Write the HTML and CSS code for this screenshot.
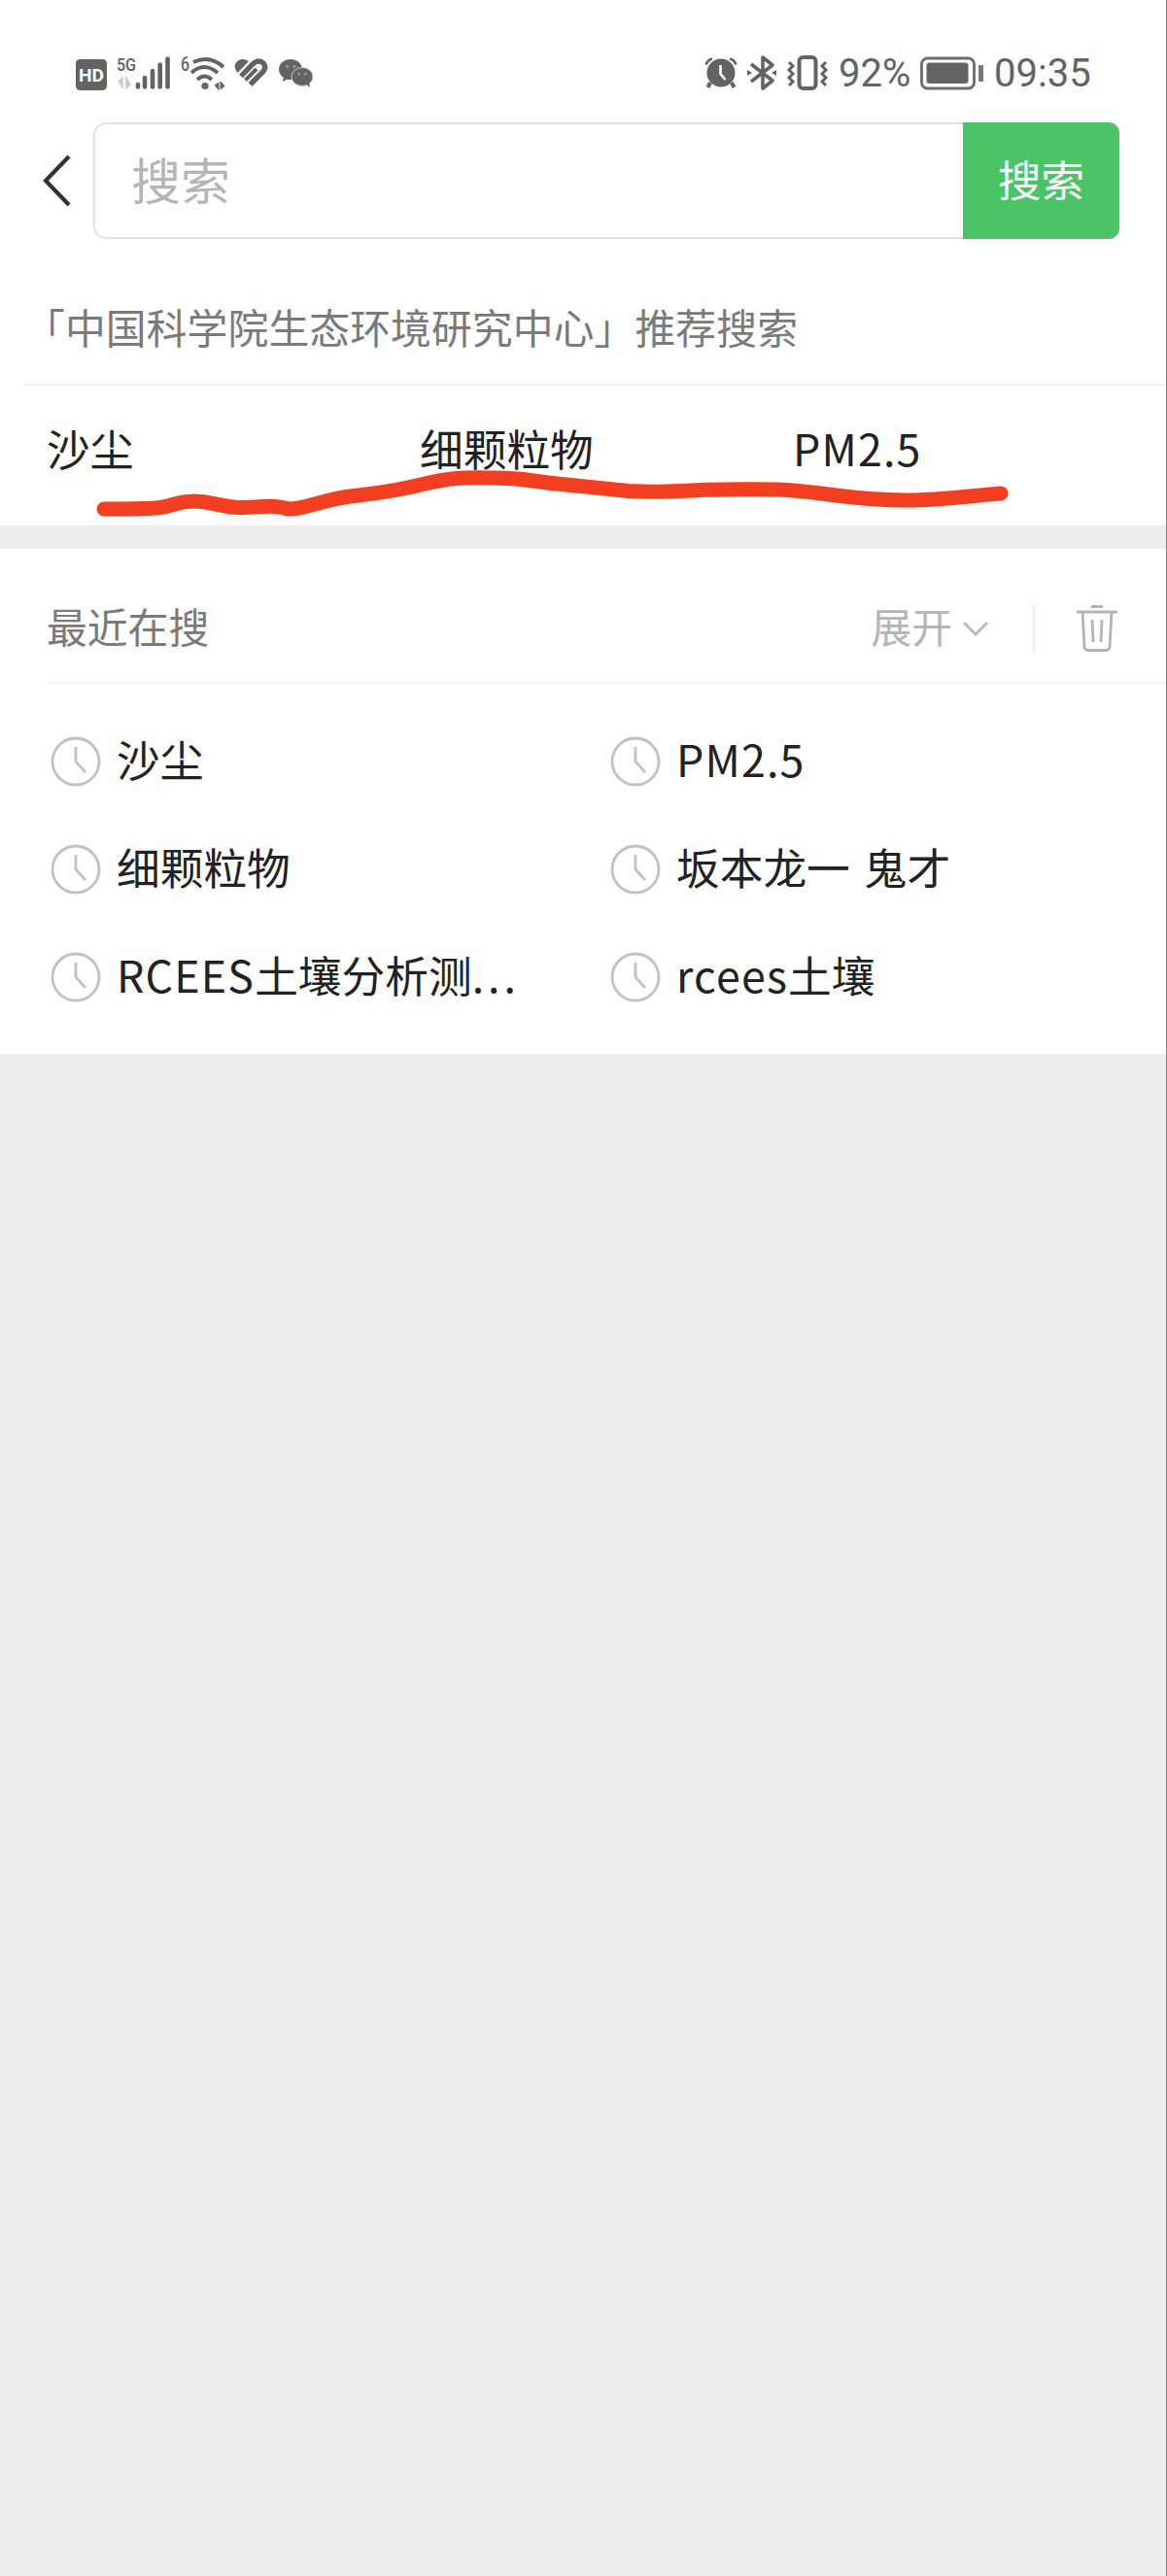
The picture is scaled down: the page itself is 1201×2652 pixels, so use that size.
FILE: index.html
```html
<!DOCTYPE html>
<html lang="zh-CN">
<head>
<meta charset="utf-8">
<meta name="viewport" content="width=device-width, initial-scale=1">
<title>搜索</title>
<link rel="stylesheet" href="styles.css">
</head>
<body>

<div class="page">

  <div class="status-bar">
    <div class="status-left">
      <svg class="icon-hd" width="32" height="36" viewBox="0 0 32 36">
        <rect x="0" y="4" width="32" height="32" rx="4.500" fill="#636363"/>
        <text x="3" y="26.500" font-size="19" font-weight="700" textLength="26" lengthAdjust="spacingAndGlyphs">HD</text>
      </svg>
      <svg class="icon-signal" width="56" height="36" viewBox="0 0 56 36">
        <text x="0" y="15.500" font-size="19" font-weight="500" textLength="20" lengthAdjust="spacingAndGlyphs">5G</text>
        <path d="M2 27l4-4v11M10 23v11l4-4z" fill="#ccc" stroke="#ccc" stroke-width="1.500"/>
        <path d="M22 30v2.500M29 23v9.500M37 16v16.500M44.700 9.500v23M52.500 3.500v29" fill="none" stroke="#636363" stroke-width="4.600" stroke-linecap="round"/>
      </svg>
      <svg class="icon-wifi" width="47" height="36" viewBox="0 0 47 36">
        <text x="0" y="15.500" font-size="20" font-weight="500" textLength="9" lengthAdjust="spacingAndGlyphs">6</text>
        <g fill="none" stroke="#636363" stroke-width="3.800">
          <path d="M13 7Q30 -1 44 12"/>
          <path d="M11 18Q24 6 38 18"/>
          <path d="M17 25Q24.500 18 32 25"/>
        </g>
        <circle cx="25" cy="31.500" r="3.600" fill="#636363"/>
        <path d="M35 31l4-3v8M41 27v8l4-3.500z" fill="#636363" stroke="#636363" stroke-width="1"/>
      </svg>
      <svg class="icon-heart" width="35" height="36" viewBox="0 0 35 36">
        <path d="M3.500 18Q-1.500 11 2 7.500Q7 1.500 15 6z" fill="#636363"/>
        <path d="M7 21.500L19 9Q25 3.500 30 8Q34 12.500 29 17.500L16.500 30" fill="none" stroke="#636363" stroke-width="5.400"/>
        <path d="M11.500 25.500L23 14" fill="none" stroke="#636363" stroke-width="4"/>
      </svg>
      <svg class="icon-wechat" width="36" height="36" viewBox="0 0 36 36">
        <ellipse cx="12" cy="14.500" rx="12" ry="10.500" fill="#636363"/>
        <path d="M5 21l-1 6 6-3z" fill="#636363"/>
        <ellipse cx="24" cy="22" rx="11" ry="9.500" fill="#636363" stroke="#ccc" stroke-width="1"/>
        <path d="M27 29l5 4-1-6z" fill="#636363"/>
        <g fill="#a0a0a0">
          <circle cx="8.500" cy="11.500" r="1.500"/><circle cx="16" cy="11.500" r="1.500"/>
          <circle cx="20.500" cy="19" r="1.300"/><circle cx="27.500" cy="19" r="1.300"/>
        </g>
      </svg>
    </div>

    <div class="status-right">
      <svg class="icon-alarm" width="34" height="36" viewBox="0 0 34 36">
        <circle cx="17" cy="18" r="14.500" fill="#636363"/>
        <path d="M1.500 9.500Q3 5 8 3.500M32.500 9.500Q31 5 26 3.500" fill="none" stroke="#636363" stroke-width="2.500"/>
        <path d="M6 28l-2.500 5M28 28l2.500 5" stroke="#636363" stroke-width="4"/>
        <path d="M16.500 10v9l5 6" fill="none" stroke="#fff" stroke-width="2.600"/>
      </svg>
      <svg class="icon-bluetooth" width="30" height="36" viewBox="0 0 30 36">
        <path d="M4 9l22 17-10 8V2l10 8L4 27" fill="none" stroke="#636363" stroke-width="3.600" stroke-linejoin="round"/>
        <path d="M0 15l5 3-5 3zM30 15l-5 3 5 3z" fill="#636363"/>
      </svg>
      <svg class="icon-vibrate" width="42" height="36" viewBox="0 0 42 36">
        <rect x="12.500" y="2" width="17" height="32" rx="4" fill="none" stroke="#636363" stroke-width="4"/>
        <path d="M2 7l4 4-4 4 4 4-4 4 4 4-4 4M40 7l-4 4 4 4-4 4 4 4-4 4 4 4" fill="none" stroke="#636363" stroke-width="3"/>
      </svg>
      <span class="battery-text">92%</span>
      <svg class="icon-battery" width="65" height="36" viewBox="0 0 65 36">
        <rect x="1.500" y="3" width="54" height="31" rx="6" fill="none" stroke="#6c6c6c" stroke-width="2.800"/>
        <rect x="6.500" y="7.500" width="43" height="21.500" rx="3" fill="#636363"/>
        <rect x="60" y="10" width="5" height="17" rx="1" fill="#777"/>
      </svg>
      <span class="clock">09:35</span>
    </div>
  </div>

  <form class="search" action="javascript:void(0)">
    <svg class="back" width="30" height="56" viewBox="0 0 30 56">
      <path d="M27 3L3 28l24 25" fill="none" stroke="#333" stroke-width="4.200"/>
    </svg>
    <input type="text" class="search-input" placeholder="搜索">
    <button type="submit" class="search-button">搜索</button>
  </form>

  <div class="recommend">
    <h2 class="recommend-title">「中国科学院生态环境研究中心」推荐搜索</h2>
    <div class="recommend-list">
      <span>沙尘</span>
      <span>细颗粒物</span>
      <span class="latin">PM2.5</span>
    </div>
    <!-- hand-drawn underline over the words -->
    <svg class="marker" width="950" height="60" viewBox="90 480 950 60">
      <path d="M107 524C130 524 145 524 160 523S182 516 200 516S228 522.500 247 522.500S280 519 297 524C315 524 330 515 360 511C385 508 400 507 433 499S475 491.500 510 492S550 496 573 498L647 505.500Q672 507 700 505.500T727 504.200Q770 503.500 800 504C843 505 870 515 933 515C965 515 995 511 1030 508"/>
    </svg>
  </div>

  <div class="recent">
    <div class="recent-header">
      <h2 class="recent-title">最近在搜</h2>
      <span class="expand">展开</span>
      <svg class="arrow" width="28" height="18" viewBox="0 0 28 18">
        <path d="M2 3l12 12L26 3" fill="none" stroke="#b8b8b8" stroke-width="2.800"/>
      </svg>
      <span class="separator"></span>
      <svg class="trash" width="44" height="50" viewBox="0 0 44 50">
        <g fill="none" stroke="#b4b4b4" stroke-width="2.800">
          <path d="M16 2.500h12M1 8h42"/>
          <path d="M7 8l2 36q.3 3.500 4 3.500h18q3.700 0 4-3.500l2-36"/>
          <path d="M17 16l1 23M27 16l-1 23"/>
        </g>
      </svg>
    </div>

    <div class="recent-list">
      <div class="item">
        <svg class="time" viewBox="0 0 52 52"><circle cx="26" cy="26" r="24"/><path d="M26 11v15l10 11"/></svg>
        <span class="item-text">沙尘</span>
      </div>
      <div class="item">
        <svg class="time" viewBox="0 0 52 52"><circle cx="26" cy="26" r="24"/><path d="M26 11v15l10 11"/></svg>
        <span class="item-text latin">PM2.5</span>
      </div>
      <div class="item">
        <svg class="time" viewBox="0 0 52 52"><circle cx="26" cy="26" r="24"/><path d="M26 11v15l10 11"/></svg>
        <span class="item-text">细颗粒物</span>
      </div>
      <div class="item">
        <svg class="time" viewBox="0 0 52 52"><circle cx="26" cy="26" r="24"/><path d="M26 11v15l10 11"/></svg>
        <span class="item-text">坂本龙一 鬼才</span>
      </div>
      <div class="item">
        <svg class="time" viewBox="0 0 52 52"><circle cx="26" cy="26" r="24"/><path d="M26 11v15l10 11"/></svg>
        <span class="item-text"><span class="latin">RCEES</span>土壤分析测<span class="dots">...</span></span>
      </div>
      <div class="item">
        <svg class="time" viewBox="0 0 52 52"><circle cx="26" cy="26" r="24"/><path d="M26 11v15l10 11"/></svg>
        <span class="item-text"><span class="latin">rcees</span>土壤</span>
      </div>
    </div>
  </div>

</div>

</body>
</html>
```
FILE: styles.css
```css
* {
  box-sizing: border-box;
}

body {
  margin: 0;
  background-color: #ededed;
  font-family: "Noto Sans CJK SC", sans-serif;
  color: #222;
}

h2 {
  margin: 0;
  font-weight: 400;
}

svg {
  display: block;
  flex: none;
}

.page {
  min-height: 2652px;
  border-right: 1px solid #808080;
}

/* status bar */
.status-bar {
  display: flex;
  justify-content: space-between;
  height: 93px;
  padding: 57px 78px 0 78px;
  background-color: #fefefe;
  color: #636363;
}

.status-bar svg {
  overflow: visible;
}

.status-bar text {
  font-family: Roboto, sans-serif;
  fill: #636363;
}

.status-bar .icon-hd text {
  fill: #fff;
}

.status-left, .status-right {
  display: flex;
  height: 36px;
}

.icon-signal, .icon-wifi {
  margin-left: 10px;
}

.icon-heart {
  margin-left: 8px;
}

.icon-wechat {
  margin-left: 11px;
}

.icon-bluetooth {
  margin-left: 10px;
}

.icon-vibrate {
  margin-left: 11px;
}

.battery-text, .clock {
  font-family: Roboto, sans-serif;
  font-size: 40px;
  line-height: 38px;
}

.battery-text {
  width: 75px;
  margin-left: 11px;
}

.icon-battery {
  margin-left: 9px;
}

.clock {
  width: 99px;
  margin-left: 11px;
}

/* search */
.search {
  display: flex;
  align-items: center;
  height: 153px;
  padding: 33px 48px 0 44px;
  background-color: #fefefe;
}

.search-input {
  flex: 1;
  min-width: 0;
  height: 120px;
  margin-left: 22px;
  padding: 0 37px 5px;
  border: 2px solid #e2e2e2;
  border-right: none;
  border-radius: 13px 0 0 13px;
  background-color: #fefefe;
  font-family: inherit;
  font-size: 51px;
}

.search-input::placeholder {
  color: #b5b5b5;
}

.search-button {
  width: 161px;
  height: 120px;
  padding: 0 0 5px;
  border: none;
  border-radius: 0 11px 11px 0;
  background-color: #4bc467;
  color: #fff;
  font-family: inherit;
  font-size: 44.500px;
}

/* recommended words */
.recommend {
  position: relative;
  height: 295px;
  padding-left: 25px;
  background-color: #fefefe;
}

.recommend-title {
  height: 151px;
  padding-top: 60px;
  border-bottom: 2px solid #f1f1f1;
  color: #7a7a7a;
  font-size: 41.800px;
  line-height: 60px;
  letter-spacing: 0.1px;
}

.recommend-list {
  display: grid;
  grid-template-columns: repeat(3, 384px);
  margin-left: 23px;
  padding-top: 34px;
  font-size: 44.700px;
  line-height: 60px;
}

.latin {
  letter-spacing: 1.200px;
}

.dots {
  letter-spacing: 4px;
}

.marker {
  position: absolute;
  left: 90px;
  top: 234px;
}

.marker path {
  fill: none;
  stroke: #f23f22;
  stroke-width: 15;
  stroke-linecap: round;
  stroke-linejoin: round;
}

/* recent searches */
.recent {
  height: 520px;
  margin-top: 24px;
  padding-left: 48px;
  background-color: #fefefe;
}

.recent-header {
  display: flex;
  align-items: center;
  height: 139px;
  padding: 26px 49px 0 0;
  border-bottom: 2px solid #f1f1f1;
  font-size: 41.800px;
  line-height: 60px;
}

.recent-title {
  flex: 1;
  padding-bottom: 6px;
  color: #7a7a7a;
  font-size: 41.800px;
}

.expand {
  padding-bottom: 6px;
  color: #b5b5b5;
}

.arrow {
  margin-left: 10px;
}

.separator {
  width: 2px;
  height: 48px;
  margin: 0 42px 0 45px;
  background-color: #ebebeb;
}

.recent-list {
  display: grid;
  grid-template-columns: 576px 576px;
  grid-auto-rows: 111px;
  padding-top: 24px;
}

.item {
  display: flex;
  align-items: center;
  padding-left: 4px;
}

.time {
  width: 52px;
  height: 52px;
  fill: none;
  stroke: #c2c2c2;
  stroke-width: 2.800;
}

.item-text {
  margin-left: 16px;
  padding-bottom: 6px;
  font-size: 44.700px;
  line-height: 60px;
  word-spacing: 4px;
  white-space: nowrap;
}
```
